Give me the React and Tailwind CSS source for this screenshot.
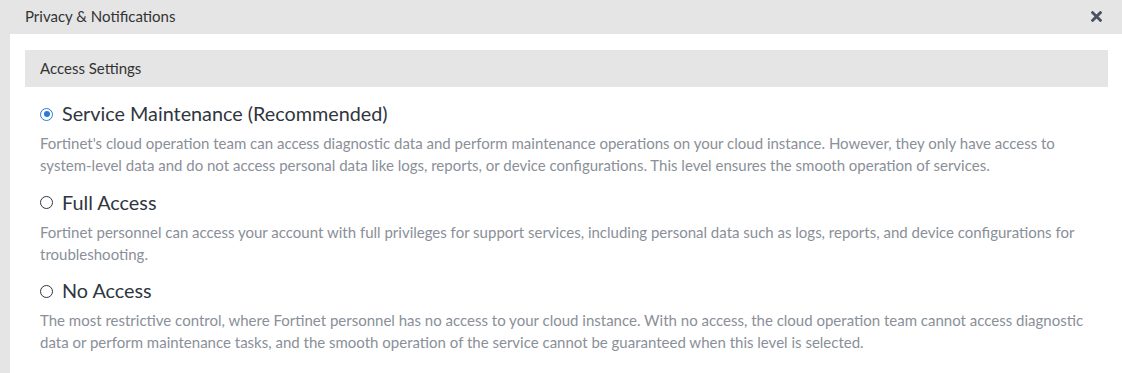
import React, { useState } from 'react';

const OPTIONS = [
  {
    id: 'maintenance',
    label: 'Service Maintenance (Recommended)',
    desc: "Fortinet's cloud operation team can access diagnostic data and perform maintenance operations on your cloud instance. However, they only have access to system-level data and do not access personal data like logs, reports, or device configurations. This level ensures the smooth operation of services.",
  },
  {
    id: 'full',
    label: 'Full Access',
    desc: 'Fortinet personnel can access your account with full privileges for support services, including personal data such as logs, reports, and device configurations for troubleshooting.',
  },
  {
    id: 'none',
    label: 'No Access',
    desc: 'The most restrictive control, where Fortinet personnel has no access to your cloud instance. With no access, the cloud operation team cannot access diagnostic data or perform maintenance tasks, and the smooth operation of the service cannot be guaranteed when this level is selected.',
  },
];

const Radio = ({ checked }) => (
  <span
    className={`flex h-[13px] w-[13px] shrink-0 items-center justify-center rounded-full border-[1.5px] ${
      checked ? 'border-[#2b7bd6]' : 'border-[#2f3640]'
    }`}
  >
    {checked && <span className="h-[6px] w-[6px] rounded-full bg-[#2b7bd6]" />}
  </span>
);

export default function App() {
  const [access, setAccess] = useState('maintenance');

  return (
    <div className="h-[373px] w-[1122px] bg-[#e5e5e5] font-['Lato','Liberation_Sans',sans-serif] overflow-hidden">
      {/* header */}
      <div className="flex h-[34px] items-center justify-between pl-[25px] pr-[20px] pb-[1px]">
        <span className="text-[15px] text-[#333]">Privacy &amp; Notifications</span>
        <button className="text-[#4a5260]">
          <svg width="11" height="11" viewBox="0 0 10 10">
            <path d="M1.5 1.5 L8.5 8.5 M8.5 1.5 L1.5 8.5" stroke="currentColor" strokeWidth="2.6" strokeLinecap="square" />
          </svg>
        </button>
      </div>

      {/* body */}
      <div className="ml-[10px] h-[339px] bg-white pl-[15px] pr-[14px] pt-[16px]">
        <div className="flex h-[37px] items-center bg-[#e5e5e5] pb-[1px] pl-[15px] text-[15px] text-[#333]">
          Access Settings
        </div>

        <div className="pl-[15px] pr-[20px] pt-[13px]">
          {OPTIONS.map((o) => (
            <div key={o.id} className="mb-[12.5px]">
              <label
                className="flex h-[28px] cursor-pointer items-center gap-[9px]"
                onClick={() => setAccess(o.id)}
              >
                <Radio checked={access === o.id} />
                <span className="text-[19.8px] text-[#2f3640]">{o.label}</span>
              </label>
              <p className="mt-[4px] text-[15px] leading-[22px] text-[#8a8f98] [hyphens:manual]">{o.desc}</p>
            </div>
          ))}
        </div>
      </div>
    </div>
  );
}
